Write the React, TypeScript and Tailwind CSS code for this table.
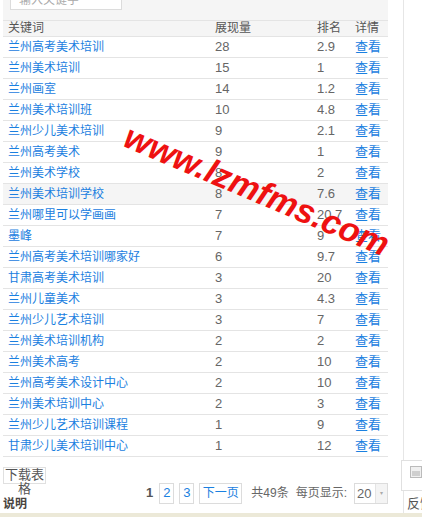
const rows: [string, number, string][] = [
  ["兰州高考美术培训", 28, "2.9"],
  ["兰州美术培训", 15, "1"],
  ["兰州画室", 14, "1.2"],
  ["兰州美术培训班", 10, "4.8"],
  ["兰州少儿美术培训", 9, "2.1"],
  ["兰州高考美术", 9, "1"],
  ["兰州美术学校", 8, "2"],
  ["兰州美术培训学校", 8, "7.6"],
  ["兰州哪里可以学画画", 7, "20.7"],
  ["墨峰", 7, "9"],
  ["兰州高考美术培训哪家好", 6, "9.7"],
  ["甘肃高考美术培训", 3, "20"],
  ["兰州儿童美术", 3, "4.3"],
  ["兰州少儿艺术培训", 3, "7"],
  ["兰州美术培训机构", 2, "2"],
  ["兰州美术高考", 2, "10"],
  ["兰州高考美术设计中心", 2, "10"],
  ["兰州美术培训中心", 2, "3"],
  ["兰州少儿艺术培训课程", 1, "9"],
  ["甘肃少儿美术培训中心", 1, "12"],
];

const HOVER_ROW = 7;

export default function App() {
  return (
    <div className="relative h-[517px] w-[422px] overflow-hidden bg-white font-['Liberation_Sans','Noto_Sans_CJK_SC',sans-serif] text-[12px] text-[#555]">
      <div className="flex h-[513px]">
        {/* main panel */}
        <div className="w-[404px] shrink-0 border-r border-[#e6e6e6] pl-[3px] pr-[15px]">
          {/* search strip, input scrolled half out of view */}
          <div className="flex h-[20px] items-start bg-[#f5f5f5] pl-[7px]">
            <div className="-mt-[12px] h-[22px] w-[112px] border border-[#dcdcdc] bg-white pl-[8px] leading-[22px] text-[#aaa]">
              输入关键字
            </div>
          </div>

          {/* table */}
          <div className="grid grid-cols-[207px_102px_38px_38px] border-y border-[#e4e4e4] bg-[#f5f5f5] leading-[15px]">
            <div className="pl-[5px]">关键词</div>
            <div className="pl-[5px]">展现量</div>
            <div className="pl-[5px]">排名</div>
            <div className="pl-[5px]">详情</div>
          </div>
          {rows.map(([kw, views, rank], i) => (
            <div
              className={`grid h-[21px] grid-cols-[207px_102px_38px_38px] items-center border-b border-[#e4e4e4] ${i === HOVER_ROW ? "bg-[#f5f5f5]" : ""}`}
              key={kw}
            >
              <div className="pl-[5px] text-[#1a80e0]">{kw}</div>
              <div className="pl-[5px] text-[13px] text-[#666]">{views}</div>
              <div className="pl-[5px] text-[13px] text-[#666]">{rank}</div>
              <div className="pl-[5px] text-[13px] text-[#1a80e0]">查看</div>
            </div>
          ))}

          {/* footer */}
          <div className="mt-[10px] flex justify-between">
            <div className="flex flex-col">
              <div className="h-[17px] w-[43px] border border-[#e0e0e0] text-center leading-[14px] text-[13px] text-[#555]">
                下载表格
              </div>
              <div className="mt-[13px] font-bold leading-[14px] text-[#4a4440]">说明</div>
            </div>
            <div className="mt-[15px] flex h-[22px] items-center text-[12px]">
              <span className="mr-[6px] text-[13px] font-bold text-[#555]">1</span>
              <span className="mr-[5px] flex h-[21px] w-[15px] items-center justify-center border border-[#dcdcdc] text-[13px] text-[#1a80e0]">
                2
              </span>
              <span className="mr-[5px] flex h-[21px] w-[15px] items-center justify-center border border-[#dcdcdc] text-[13px] text-[#1a80e0]">
                3
              </span>
              <span className="mr-[9px] flex h-[21px] w-[43px] items-center justify-center border border-[#dcdcdc] text-[#1a80e0]">
                下一页
              </span>
              <span className="mr-[7px] text-[#666]">共49条</span>
              <span className="mr-[7px] text-[#666]">每页显示:</span>
              <span className="flex h-[21px] w-[34px] items-stretch border border-[#dcdcdc]">
                <span className="flex-1 pl-[2px] text-[13px] leading-[19px] text-[#666]">20</span>
                <span className="flex w-[12px] items-center justify-center border-l border-[#e4e4e4] bg-[#f4f4f4] text-[6px] text-[#aaa]">
                  ▾
                </span>
              </span>
            </div>
          </div>
        </div>

        {/* right edge panel */}
        <div className="flex flex-1 flex-col pt-[460px]">
          <div className="-ml-[3px] h-[31px] border border-[#e0e0e0] bg-white pl-[8px] pt-[5px]">
            <div className="flex h-[12px] w-[12px] items-end border border-[#bbb] bg-[#f0f0f0] p-[1px]">
              <div className="h-[5px] w-full bg-[#cfcfcf]" />
            </div>
          </div>
          <div className="mt-[5px] whitespace-nowrap pl-[3px] text-[13px] leading-[15px] text-[#555]">反馈</div>
        </div>
      </div>
      <div className="h-[4px] bg-[#ece9d8]" />

      {/* watermark */}
      <span className="pointer-events-none absolute left-[115px] top-[170px] rotate-[23deg] whitespace-nowrap text-[34px] font-bold italic leading-[40px] text-[#ee1111]">
        www.lzmfms.com
      </span>
    </div>
  );
}
